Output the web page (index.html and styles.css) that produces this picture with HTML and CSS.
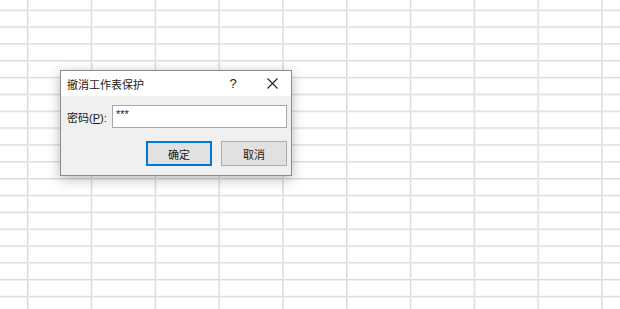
FILE: index.html
```html
<!DOCTYPE html>
<html lang="zh-CN">
<head>
    <meta charset="UTF-8">
    <title>撤消工作表保护</title>
    <link rel="stylesheet" href="styles.css">
</head>
<body>
    <div class="dialog">
        <div class="titlebar">
            <span class="title">撤消工作表保护</span>
            <span class="help">?</span>
            <span class="close">
                <svg width="11" height="11" viewBox="0 0 11 11">
                    <path d="M0.5 0.5 L10.5 10.5 M10.5 0.5 L0.5 10.5" stroke="#222" stroke-width="1.1" fill="none"/>
                </svg>
            </span>
        </div>
        <div class="content">
            <div class="field">
                <label for="pwd">密码(<u>P</u>):</label>
                <div class="input" id="pwd">***</div>
            </div>
            <div class="actions">
                <button class="btn default">确定</button>
                <button class="btn">取消</button>
            </div>
        </div>
    </div>
</body>
</html>
```

FILE: styles.css
```css
html, body {
    margin: 0;
    height: 100%;
}
body {
    font-family: "Liberation Sans", "Noto Sans CJK SC", sans-serif;
    font-size: 11px;
    color: #1a1a1a;
    overflow: hidden;
    background-color: #fff;
    background-image:
        linear-gradient(to right, #dadada 0, #dadada 1px, #eeeeee 1px, #eeeeee 2px, transparent 2px),
        linear-gradient(to bottom, #dadada 0, #dadada 1px, #f0f0f0 1px, #f0f0f0 2px, transparent 2px);
    background-size: 63.8px 100%, 100% 16.85px;
    background-position: 27px 0, 0 9.5px;
}
.dialog {
    margin: 70px 0 0 60px;
    width: 232px;
    box-sizing: border-box;
    border: 1px solid #8c8c8c;
    background: #f0f0f0;
    box-shadow: 0 3px 12px rgba(0, 0, 0, 0.28);
}
.titlebar {
    height: 25px;
    background: #fff;
    display: flex;
    align-items: center;
    padding-left: 6px;
}
.title {
    flex: 1;
}
.help {
    width: 40px;
    text-align: center;
    font-size: 13px;
}
.close {
    width: 38px;
    display: flex;
    justify-content: center;
    align-items: center;
}
.content {
    padding: 9px 4px 9px 6px;
}
.field {
    display: flex;
    align-items: center;
}
.field label {
    width: 45px;
}
.input {
    width: 175px;
    height: 23px;
    box-sizing: border-box;
    border: 1px solid #a8a8a8;
    background: #fff;
    padding: 1px 3px;
    font-size: 11px;
    line-height: 14px;
}
.actions {
    display: flex;
    justify-content: flex-end;
    gap: 9px;
    margin-top: 13px;
}
.btn {
    width: 66px;
    height: 25px;
    box-sizing: border-box;
    border: 1px solid #adadad;
    background: #e1e1e1;
    font-family: inherit;
    font-size: 11px;
    color: #1a1a1a;
    padding: 0;
}
.btn.default {
    border: 2px solid #0078d7;
}
```
